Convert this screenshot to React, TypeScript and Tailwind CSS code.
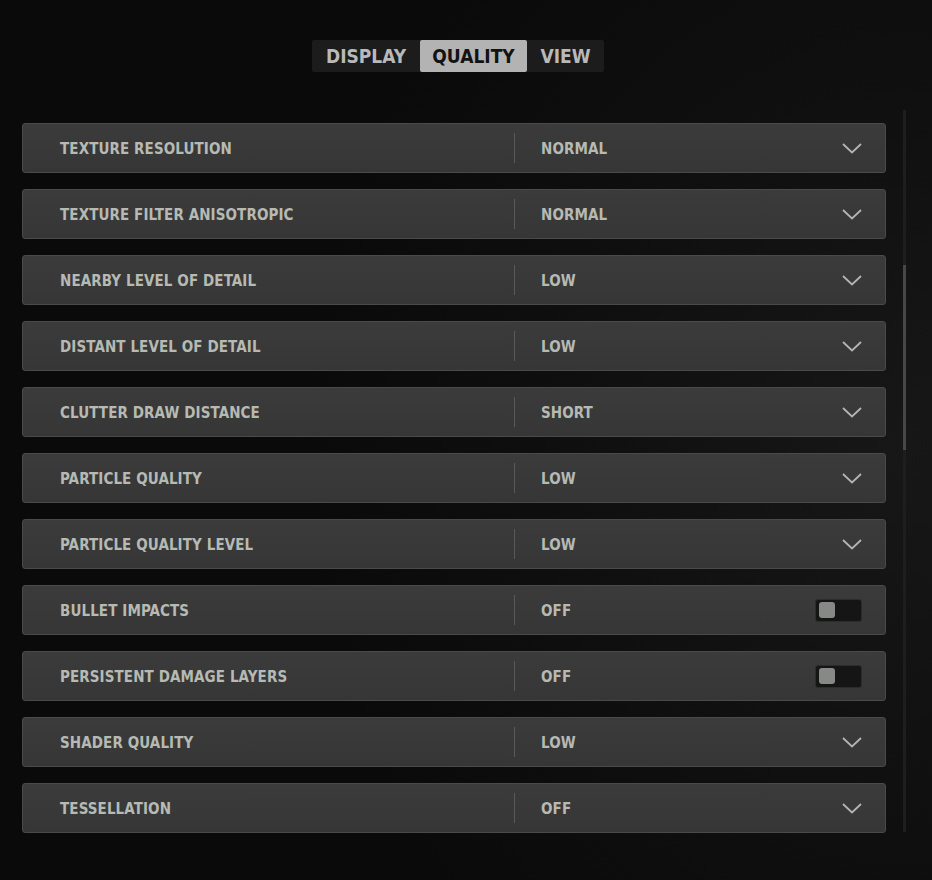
import React from "react";

type Row = { label: string; value: string; kind: "select" | "toggle" };

const rows: Row[] = [
  { label: "TEXTURE RESOLUTION", value: "NORMAL", kind: "select" },
  { label: "TEXTURE FILTER ANISOTROPIC", value: "NORMAL", kind: "select" },
  { label: "NEARBY LEVEL OF DETAIL", value: "LOW", kind: "select" },
  { label: "DISTANT LEVEL OF DETAIL", value: "LOW", kind: "select" },
  { label: "CLUTTER DRAW DISTANCE", value: "SHORT", kind: "select" },
  { label: "PARTICLE QUALITY", value: "LOW", kind: "select" },
  { label: "PARTICLE QUALITY LEVEL", value: "LOW", kind: "select" },
  { label: "BULLET IMPACTS", value: "OFF", kind: "toggle" },
  { label: "PERSISTENT DAMAGE LAYERS", value: "OFF", kind: "toggle" },
  { label: "SHADER QUALITY", value: "LOW", kind: "select" },
  { label: "TESSELLATION", value: "OFF", kind: "select" },
];

const font = { fontFamily: '"DejaVu Sans Condensed", "DejaVu Sans", sans-serif' };

function Chevron() {
  return (
    <svg width="20" height="11" viewBox="0 0 20 11" className="block">
      <path d="M1 1 L10 9.5 L19 1" fill="none" stroke="#b3b5b1" strokeWidth="1.8" />
    </svg>
  );
}

function Toggle() {
  return (
    <div className="w-[47px] h-[23px] rounded-[3px] bg-[#151515] border border-[#2c2c2c] flex items-center pl-[3px]">
      <div className="w-[16px] h-[16px] rounded-[3px] bg-[#868986]" />
    </div>
  );
}

export default function App() {
  return (
    <div
      className="w-[932px] h-[880px] overflow-hidden text-[#b6bab3] font-bold"
      style={{
        ...font,
        background:
          "radial-gradient(ellipse 600px 700px at 900px 450px, #171717 0%, #0f0f0f 55%, #0a0a0a 100%)",
      }}
    >
      <div className="flex justify-center pt-[40px] pr-[16px]">
        <div className="flex h-[32px] bg-[#1c1c1c] rounded-[2px] text-[19px] tracking-[0px]">
          <div className="w-[108px] flex items-center justify-center text-[#b9b9b9]">DISPLAY</div>
          <div className="w-[107px] flex items-center justify-center bg-[#b3b3b3] text-[#121212] rounded-[2px]">
            QUALITY
          </div>
          <div className="w-[77px] flex items-center justify-center text-[#b9b9b9]">VIEW</div>
        </div>
      </div>
      <div className="flex mt-[38px]">
        <div className="flex flex-col gap-[16px] pl-[22px] pt-[13px]">
          {rows.map((r) => (
            <div
              key={r.label}
              className="w-[864px] h-[50px] flex items-center rounded-[3px] border border-[#4a4a4a] bg-[#383838] text-[15px] tracking-[0.1px]"
              style={{ background: "linear-gradient(180deg, #3b3b3b 0%, #363636 100%)" }}
            >
              <div className="w-[491px] pl-[37px] pt-[2px]">{r.label}</div>
              <div className="w-px h-[30px] bg-[#595959]" />
              <div className="flex-1 pl-[26px] pt-[2px]">{r.value}</div>
              <div className="pr-[23px] flex items-center">
                {r.kind === "select" ? <Chevron /> : <Toggle />}
              </div>
            </div>
          ))}
        </div>
        <div className="ml-[17px] w-[3px] h-[722px] bg-[#1e1e1e] flex flex-col">
          <div className="h-[155px]" />
          <div className="h-[185px] bg-[#474747]" />
        </div>
      </div>
    </div>
  );
}
